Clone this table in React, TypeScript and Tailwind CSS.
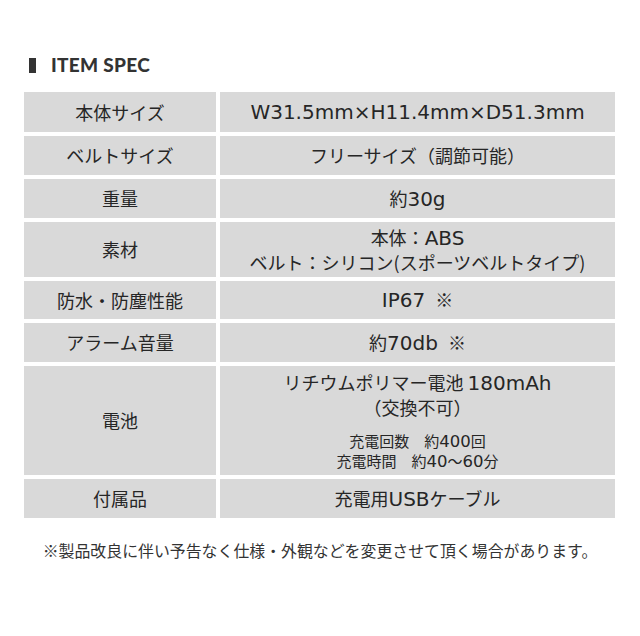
const jp = "font-['Noto_Sans_CJK_JP',sans-serif]";

// Latin runs in the reference use a wider, taller face than the Japanese text
function L({ children, small }: { children: React.ReactNode; small?: boolean }) {
  return (
    <span className={`font-['DejaVu_Sans',sans-serif] ${small ? "text-[16.5px]" : "text-[20px]"}`}>
      {children}
    </span>
  );
}

const rows: { label: string; h: string; value: React.ReactNode }[] = [
  { label: "本体サイズ", h: "h-[40px]", value: <L>W31.5mm×H11.4mm×D51.3mm</L> },
  { label: "ベルトサイズ", h: "h-[39px]", value: "フリーサイズ（調節可能）" },
  {
    label: "重量",
    h: "h-[39px]",
    value: (
      <span>
        約<L>30g</L>
      </span>
    ),
  },
  {
    label: "素材",
    h: "h-[55px]",
    value: (
      <div className="leading-[24px]">
        <div>
          本体：<L>ABS</L>
        </div>
        <div>ベルト：シリコン(スポーツベルトタイプ)</div>
      </div>
    ),
  },
  {
    label: "防水・防塵性能",
    h: "h-[38px]",
    value: (
      <span>
        <L>IP67</L>
        <span className="ml-[10px]">※</span>
      </span>
    ),
  },
  {
    label: "アラーム音量",
    h: "h-[39px]",
    value: (
      <span>
        約<L>70db</L>
        <span className="ml-[10px]">※</span>
      </span>
    ),
  },
  {
    label: "電池",
    h: "h-[109px]",
    value: (
      <div>
        <div className="leading-[24px]">
          <div>
            リチウムポリマー電池 <L>180mAh</L>
          </div>
          <div>（交換不可）</div>
        </div>
        <div className="mt-[12px] text-[15px] leading-[19px]">
          <div>
            充電回数　約<L small>400</L>回
          </div>
          <div>
            充電時間　約<L small>40</L>～<L small>60</L>分
          </div>
        </div>
      </div>
    ),
  },
  {
    label: "付属品",
    h: "h-[39px]",
    value: (
      <span>
        充電用<L>USB</L>ケーブル
      </span>
    ),
  },
];

export default function App() {
  return (
    <div className={`w-[640px] h-[636px] bg-white text-[#262626] ${jp}`}>
      <div className="pt-[55px] pl-[29px] flex items-center h-[75px]">
        <div className="w-[7px] h-[15px] bg-[#333]" />
        <div className="ml-[15px] font-['Lato',sans-serif] font-black text-[19px] tracking-[0.3px] text-[#333]">
          ITEM SPEC
        </div>
      </div>
      <div className="mt-[17px] ml-[24px] grid grid-cols-[192px_395px] gap-x-[4px] gap-y-[4px]">
        {rows.map((r) => (
          <div key={r.label} className="contents">
            <div className={`${r.h} bg-[#d9d9d9] flex items-center justify-center text-[18px]`}>
              {r.label}
            </div>
            <div className={`${r.h} bg-[#d9d9d9] flex items-center justify-center text-center text-[18px]`}>
              {r.value}
            </div>
          </div>
        ))}
      </div>
      <div className="mt-[21px] text-center text-[15.9px] text-[#333]">
        ※製品改良に伴い予告なく仕様・外観などを変更させて頂く場合があります。
      </div>
    </div>
  );
}
